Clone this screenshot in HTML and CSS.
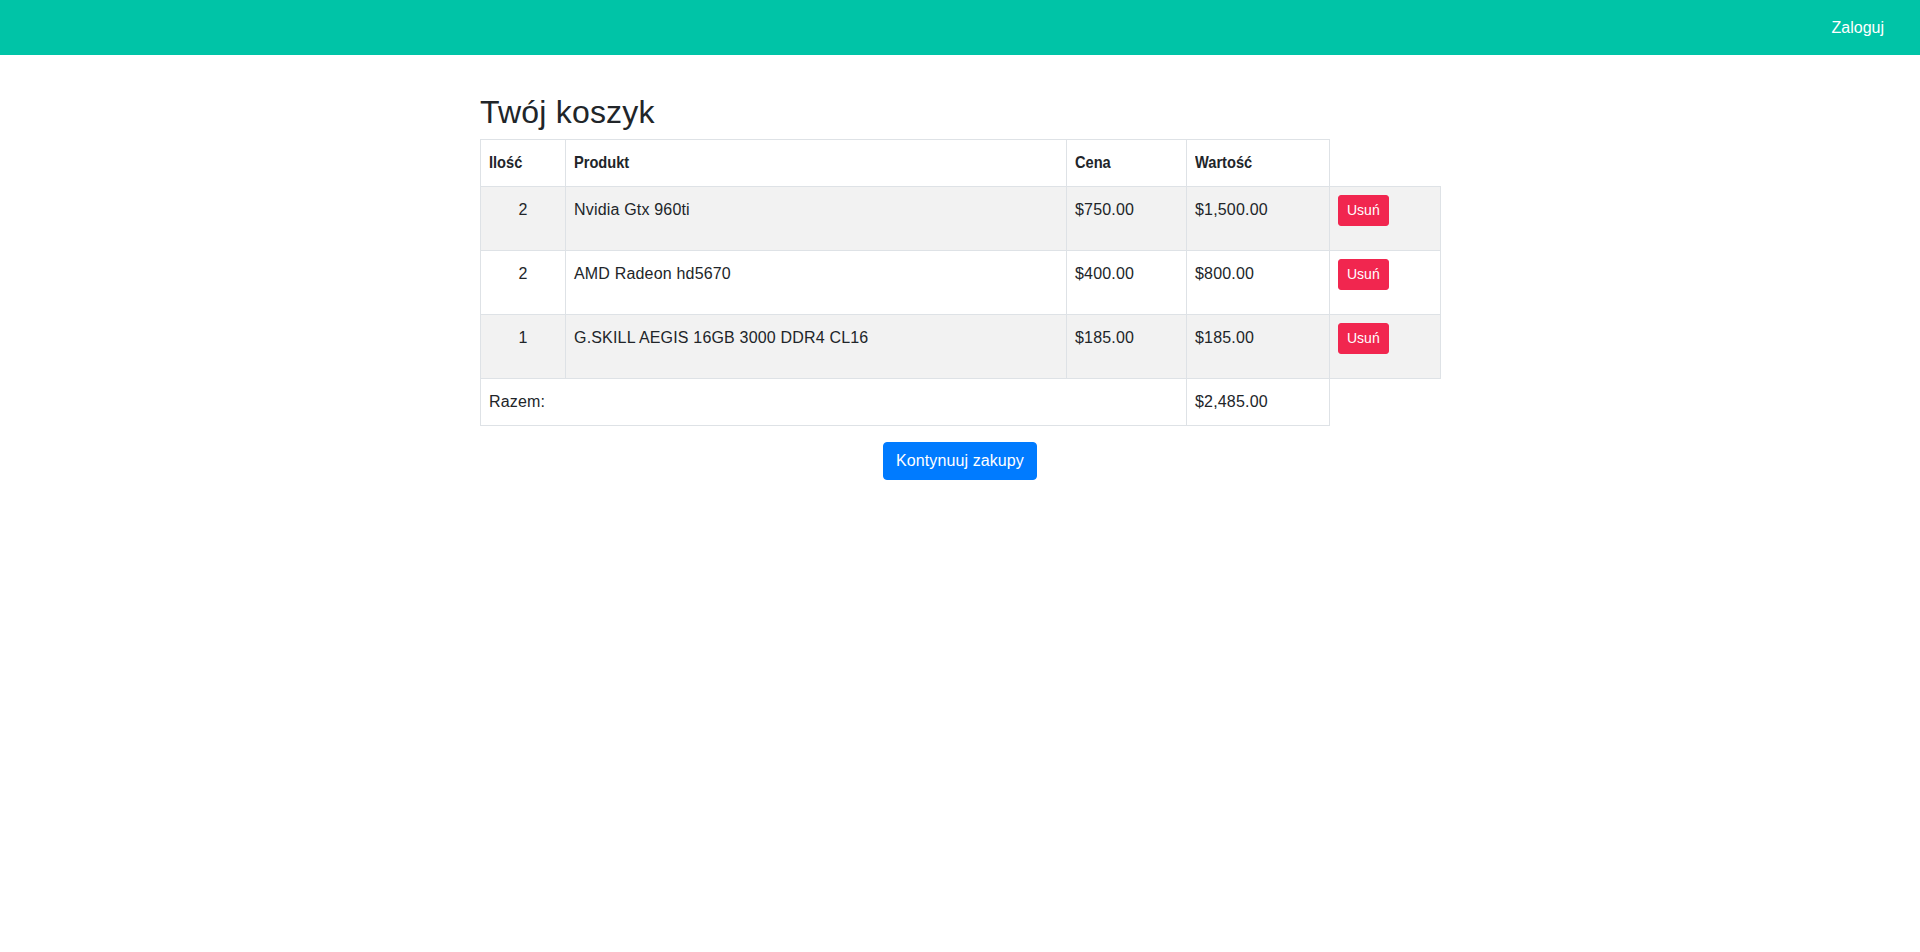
FILE: index.html
```html
<!DOCTYPE html>
<html lang="pl">
<head>
<meta charset="utf-8">
<title>Twój koszyk</title>
<link rel="stylesheet" href="styles.css">
</head>
<body>
<nav class="topbar">
  <a class="topbar-link" href="#">Zaloguj</a>
</nav>
<main class="container">
  <h2 class="title">Twój koszyk</h2>
  <table class="cart">
    <colgroup>
      <col class="c-qty">
      <col class="c-prod">
      <col class="c-price">
      <col class="c-value">
      <col class="c-act">
    </colgroup>
    <thead>
      <tr>
        <th><span class="th-label">Ilość</span></th>
        <th><span class="th-label">Produkt</span></th>
        <th><span class="th-label">Cena</span></th>
        <th><span class="th-label">Wartość</span></th>
      </tr>
    </thead>
    <tbody>
      <tr class="odd">
        <td class="qty">2</td>
        <td>Nvidia Gtx 960ti</td>
        <td>$750.00</td>
        <td>$1,500.00</td>
        <td class="act"><div class="act-box"><button class="btn-del">Usuń</button></div></td>
      </tr>
      <tr>
        <td class="qty">2</td>
        <td>AMD Radeon hd5670</td>
        <td>$400.00</td>
        <td>$800.00</td>
        <td class="act"><div class="act-box"><button class="btn-del">Usuń</button></div></td>
      </tr>
      <tr class="odd">
        <td class="qty">1</td>
        <td>G.SKILL AEGIS 16GB 3000 DDR4 CL16</td>
        <td>$185.00</td>
        <td>$185.00</td>
        <td class="act"><div class="act-box"><button class="btn-del">Usuń</button></div></td>
      </tr>
    </tbody>
    <tfoot>
      <tr>
        <td colspan="3">Razem:</td>
        <td>$2,485.00</td>
      </tr>
    </tfoot>
  </table>
  <div class="actions">
    <a class="btn-primary" href="#">Kontynuuj zakupy</a>
  </div>
</main>
</body>
</html>
```

FILE: styles.css
```css
html, body {
  margin: 0;
  padding: 0;
}
body {
  font-family: "Liberation Sans", Arial, sans-serif;
  font-size: 16px;
  color: #212529;
  background: #fff;
}
.topbar {
  height: 55px;
  background: #00c4a7;
  display: flex;
  justify-content: flex-end;
  align-items: center;
  padding: 0 36px 0 0;
  box-sizing: border-box;
}
.topbar-link {
  color: #fff;
  text-decoration: none;
  line-height: 24px;
  margin-top: 1px;
}
.container {
  width: 960px;
  margin: 0 auto;
  padding-top: 38px;
}
.title {
  margin: 0 0 8px 0;
  font-size: 32px;
  font-weight: normal;
  line-height: 1.2;
  letter-spacing: 0.2px;
}
.cart {
  width: 960px;
  border-collapse: collapse;
  table-layout: fixed;
}
.c-qty { width: 85px; }
.c-prod { width: 501px; }
.c-price { width: 120px; }
.c-value { width: 143px; }
.c-act { width: 111px; }
.cart th, .cart td {
  border: 1px solid #dee2e6;
  padding: 12px 8px;
  text-align: left;
  vertical-align: top;
  line-height: 22px;
}
.cart td {
  letter-spacing: 0.18px;
}
.cart th {
  font-weight: bold;
  font-size: 17px;
  color: #212529;
  white-space: nowrap;
}
.th-label {
  display: inline-block;
  transform: scaleX(0.86);
  transform-origin: left center;
}
.cart td.qty {
  text-align: center;
}
.cart tr.odd td {
  background: #f2f2f2;
}
.cart td.act {
  padding: 8px 8px;
  letter-spacing: 0;
}
.act-box {
  height: 47px;
}
.btn-del {
  font-family: "Liberation Sans", Arial, sans-serif;
  font-size: 14px;
  line-height: 21px;
  padding: 4px 8px;
  color: #fff;
  background: #f1264f;
  border: 1px solid #f1264f;
  border-radius: 3px;
  cursor: pointer;
}
.actions {
  display: flex;
  justify-content: center;
  padding-top: 16px;
}
.btn-primary {
  display: inline-block;
  font-size: 16px;
  line-height: 24px;
  padding: 6px 12px;
  color: #fff;
  background: #007bff;
  border: 1px solid #007bff;
  border-radius: 4px;
  text-decoration: none;
  letter-spacing: 0.1px;
}
```
